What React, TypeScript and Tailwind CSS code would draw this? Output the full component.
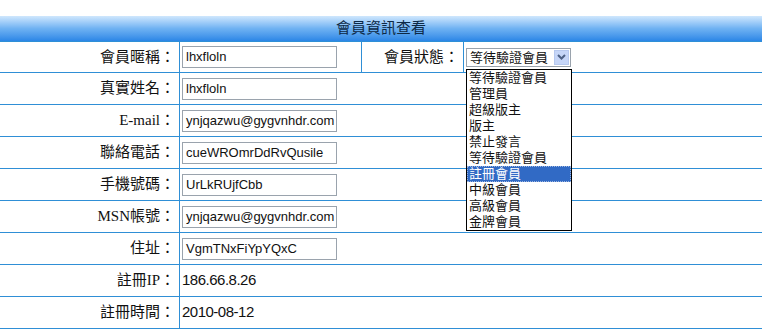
const cjk = "font-['Liberation_Serif','Noto_Sans_CJK_TC',serif]";

type Row = { label: string; value: string; input?: boolean };

const rows: Row[] = [
  { label: "真實姓名：", value: "lhxfloln", input: true },
  { label: "E-mail：", value: "ynjqazwu@gygvnhdr.com", input: true },
  { label: "聯絡電話：", value: "cueWROmrDdRvQusile", input: true },
  { label: "手機號碼：", value: "UrLkRUjfCbb", input: true },
  { label: "MSN帳號：", value: "ynjqazwu@gygvnhdr.com", input: true },
  { label: "住址：", value: "VgmTNxFiYpYQxC", input: true },
  { label: "註冊IP：", value: "186.66.8.26" },
  { label: "註冊時間：", value: "2010-08-12" },
];

const levels = ["等待驗證會員", "管理員", "超級版主", "版主", "禁止發言", "等待驗證會員", "註冊會員", "中級會員", "高級會員", "金牌會員"];

function TextBox({ value }: { value: string }) {
  return (
    <div className="ml-[2px] flex h-[22px] w-[155px] items-center border border-[#9aa3ad] bg-white px-[3px] font-['Liberation_Sans',sans-serif] text-[13px] text-[#111] whitespace-nowrap overflow-hidden">
      {value}
    </div>
  );
}

function Label({ text, w }: { text: string; w: string }) {
  return (
    <div className={`${w} flex h-full items-center justify-end border-r border-[#2f8fd6] pr-[4px] text-[15px] text-[#111] ${cjk}`}>
      {text}
    </div>
  );
}

export default function App() {
  return (
    <div className="relative h-[329px] w-[762px] overflow-hidden bg-white pt-[16px]">
      <div className={`flex h-[25px] items-center justify-center bg-gradient-to-b from-[#cfe7fd] via-[#6fb2f2] to-[#2a86e6] text-[15px] text-[#0d2946] ${cjk}`}>
        會員資訊查看
      </div>

      <div className="flex h-[32px] items-center border-b border-t border-[#2f8fd6]">
        <Label text="會員暱稱：" w="w-[180px]" />
        <div className="flex h-full w-[182px] items-center border-r border-[#2f8fd6]">
          <TextBox value="lhxfloln" />
        </div>
        <Label text="會員狀態：" w="w-[102px]" />
        <div className="flex h-full items-center pl-[2px]">
          <div className="flex h-[19px] w-[105px] items-center border border-[#9aa3ad] bg-white pl-[3px]">
            <span className={`flex-1 text-[13px] leading-none text-[#111] ${cjk}`}>等待驗證會員</span>
            <div className="mr-[1px] flex h-[15px] w-[15px] items-center justify-center border border-[#b7c9ef] bg-[#c6d6f8]">
              <svg width="9" height="6" viewBox="0 0 9 6">
                <path d="M1 1 L4.5 4.5 L8 1" stroke="#4d6185" strokeWidth="2" fill="none" />
              </svg>
            </div>
          </div>
        </div>
      </div>

      {rows.map((r) => (
        <div key={r.label} className="flex h-[32px] items-center border-b border-[#2f8fd6]">
          <Label text={r.label} w="w-[180px]" />
          {r.input ? (
            <TextBox value={r.value} />
          ) : (
            <span className="ml-[2px] font-['Liberation_Sans',sans-serif] text-[15px] text-[#111] tracking-[-0.5px]">{r.value}</span>
          )}
        </div>
      ))}

      <div className="absolute left-[466px] top-[69px] w-[106px] border border-black bg-white">
        {levels.map((l, i) => (
          <div
            key={i}
            className={`h-[16px] pl-[2px] text-[13px] leading-[16px] ${cjk} ${i === 6 ? "bg-[#316ac5] text-white outline-1 outline-dotted outline-[#9bb5e0] -outline-offset-1" : "text-[#111]"}`}
          >
            {l}
          </div>
        ))}
      </div>
    </div>
  );
}
